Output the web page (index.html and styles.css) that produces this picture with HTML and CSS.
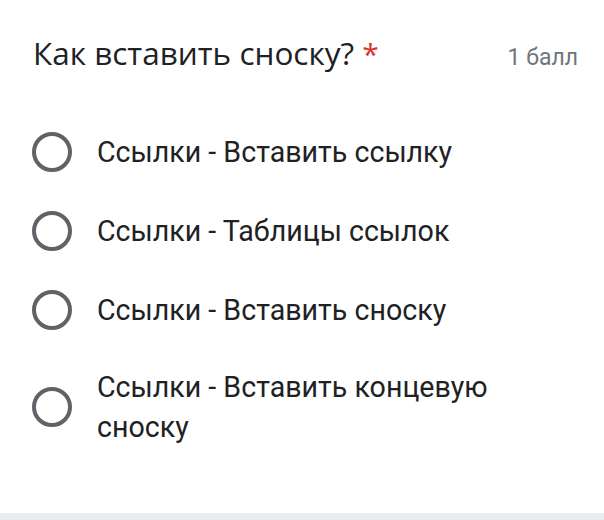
FILE: index.html
```html
<!DOCTYPE html>
<html lang="ru">
<head>
<meta charset="utf-8">
<link rel="stylesheet" href="styles.css">
</head>
<body>
<div class="card">
  <div class="header">
    <div class="title">Как вставить сноску? <span class="req">*</span></div>
    <div class="points">1 балл</div>
  </div>
  <div class="options">
    <div class="option"><span class="radio"></span><span class="label">Ссылки - Вставить ссылку</span></div>
    <div class="option"><span class="radio"></span><span class="label">Ссылки - Таблицы ссылок</span></div>
    <div class="option"><span class="radio"></span><span class="label">Ссылки - Вставить сноску</span></div>
    <div class="option multi"><span class="radio"></span><span class="label">Ссылки - Вставить концевую сноску</span></div>
  </div>
</div>
<div class="strip"></div>
</body>
</html>
```
FILE: styles.css
```css
html, body {
  margin: 0;
  padding: 0;
  background: #ffffff;
}
.card {
  height: 513px;
  box-sizing: border-box;
  padding: 33px 26px 0 33px;
  font-family: Roboto, "Open Sans", sans-serif;
}
.header {
  display: flex;
  justify-content: space-between;
  align-items: baseline;
}
.title {
  font-family: "Open Sans", Roboto, sans-serif;
  font-size: 31.5px;
  line-height: 40px;
  color: #202124;
}
.req {
  color: #d93025;
  font-size: 30px;
}
.points {
  font-size: 23px;
  color: #70757a;
}
.options {
  margin-top: 58px;
  display: flex;
  flex-direction: column;
  gap: 39px;
}
.option {
  display: flex;
  align-items: center;
  gap: 25px;
}
.option.multi {
  margin-top: -2px;
}
.radio {
  flex: none;
  width: 32px;
  height: 32px;
  border: 4px solid #5f6368;
  border-radius: 50%;
  margin-left: -1px;
}
.label {
  font-size: 28.6px;
  line-height: 40px;
  color: #202124;
  width: 420px;
}
.strip {
  height: 7px;
  background: #e8eced;
}
```
